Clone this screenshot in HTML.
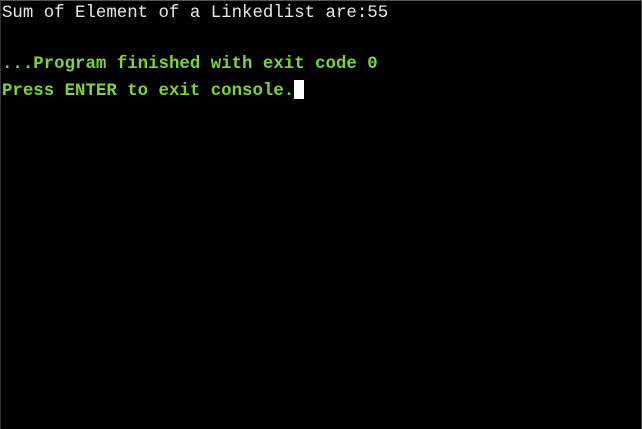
<!DOCTYPE html>
<html><head><style>
html,body{margin:0;padding:0;background:#000;width:642px;height:429px;overflow:hidden}
.t{position:absolute;left:2px;font-family:"Liberation Mono",monospace;font-size:17.4px;white-space:pre;line-height:20px}
.w{color:#e8e8e8}
.g{color:#7ed33c;font-weight:bold}
.cur{display:inline-block;width:10px;height:19px;background:#fff;vertical-align:-4px}
.edge{position:absolute;left:0;top:0;width:642px;height:429px;box-sizing:border-box;border-top:1px solid #555;border-left:1px solid #333;border-right:1px solid #444}
</style></head><body>
<div class="edge"></div>
<div class="t w" style="top:4px">Sum of Element of a Linkedlist are:55</div>
<div class="t g" style="top:55px">...Program finished with exit code 0</div>
<div class="t g" style="top:80px">Press ENTER to exit console.<span class="cur"></span></div>
</body></html>
